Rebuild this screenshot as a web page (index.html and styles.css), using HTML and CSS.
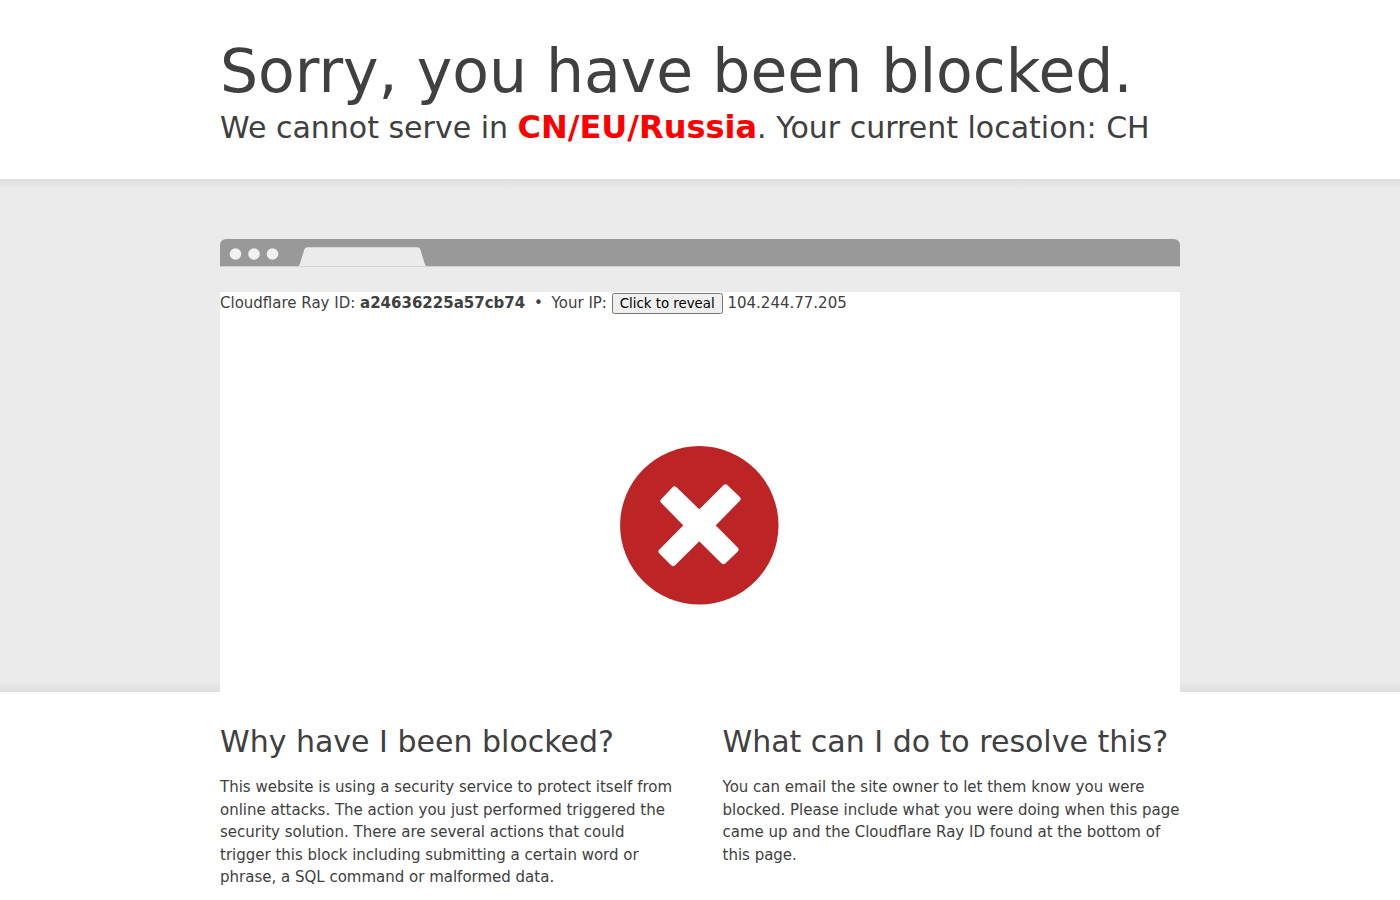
FILE: index.html
```html
<!DOCTYPE html>
<html lang="en-US">
<head>
<meta charset="UTF-8" />
<meta name="viewport" content="width=device-width, initial-scale=1" />
<title>Sorry, you have been blocked</title>
<link rel="stylesheet" href="styles.css">
</head>
<body>

<header class="wrapper header">
  <h1>Sorry, you have been blocked.</h1>
  <p class="subheadline">We cannot serve in <strong>CN/EU/Russia</strong>. Your current location: CH</p>
</header>

<section class="highlight">
  <div class="wrapper">
    <div class="browser-bar">
      <svg width="210" height="28" viewBox="0 0 210 28" aria-hidden="true">
        <g fill="#f1f1f1">
          <circle cx="15.5" cy="15" r="5.8" />
          <circle cx="34" cy="15" r="5.8" />
          <circle cx="52.5" cy="15" r="5.8" />
        </g>
        <path fill="#ebebeb" d="M77.500 27.300 Q79.200 27 80 24.500 L84.300 10.500 Q85 8.300 87.500 8.300 H197.500 Q199.700 8.300 200.400 10.500 L204.600 24.500 Q205.300 27 207 27.300 Z" />
      </svg>
    </div>
    <div class="screenshot">
      <div class="details">
        <span>Cloudflare Ray ID: <strong>a24636225a57cb74</strong></span>
        <span class="separator">&bull;</span>
        <span>Your IP: <button type="button" id="revealBtn">Click to reveal</button> <span id="ip">104.244.77.205</span></span>
      </div>
      <svg class="error-icon" width="160" height="160" viewBox="0 0 160 160" role="img" aria-label="Blocked">
        <circle cx="79.300" cy="79.300" r="79.200" fill="#bd2426" />
        <path fill="#fff" stroke="#fff" stroke-width="6" stroke-linejoin="round" d="M54.500 43.500 L79.300 67.500 L105.500 41.500 L117.500 53 L91.500 79.300 L115.500 103.500 L103.500 115 L79.300 91 L53 117 L41.500 105.500 L67.500 79.300 L43.500 55 Z" />
      </svg>
    </div>
  </div>
</section>

<main class="wrapper columns">
  <section>
    <h2>Why have I been blocked?</h2>
    <p>This website is using a security service to protect itself from online attacks. The action you just performed triggered the security solution. There are several actions that could trigger this block including submitting a certain word or phrase, a SQL command or malformed data.</p>
  </section>
  <section>
    <h2>What can I do to resolve this?</h2>
    <p>You can email the site owner to let them know you were blocked. Please include what you were doing when this page came up and the Cloudflare Ray ID found at the bottom of this page.</p>
  </section>
</main>

</body>
</html>
```
FILE: styles.css
```css
* {
  box-sizing: border-box;
}
body {
  margin: 0;
  font-family: "DejaVu Sans", sans-serif;
  font-size: 15px;
  line-height: 1.5;
  color: #404040;
  background: #fff;
}
h1, h2, p {
  margin: 0;
  font-weight: 400;
}
.wrapper {
  width: 90%;
  max-width: 960px;
  margin: 0 auto;
}
.header {
  padding: 36px 0 30px;
}
h1 {
  font-size: 60px;
  line-height: 70px;
}
.subheadline {
  font-size: 30px;
  line-height: 42px;
}
.subheadline strong {
  font-size: 32px;
  color: #f00;
}
.highlight {
  padding-top: 60px;
  background: linear-gradient(to bottom, #dedede, #ebebeb 10px, #ebebeb calc(100% - 10px), #dedede);
}
.browser-bar {
  height: 28px;
  overflow: hidden;
  background: linear-gradient(to bottom, #999 27px, #d0d0d0 27px);
  border-radius: 6px 6px 0 0;
}
.browser-bar svg {
  display: block;
}
.screenshot {
  display: flex;
  flex-direction: column;
  min-height: 400px;
  margin-top: 25px;
  background: #fff;
}
.separator {
  margin: 0 4px;
}
.details button {
  padding: 1px 6px;
  font-family: inherit;
}
.error-icon {
  margin: 131px auto 0;
}
.columns {
  display: grid;
  grid-template-columns: 1fr 1fr;
  gap: 45px;
  padding: 30px 0;
}
h2 {
  margin-bottom: 15px;
  font-size: 30px;
  line-height: 39px;
}
@media (max-width: 720px) {
  .columns {
    grid-template-columns: 1fr;
  }
  h1 {
    font-size: 40px;
    line-height: 48px;
  }
}
```
